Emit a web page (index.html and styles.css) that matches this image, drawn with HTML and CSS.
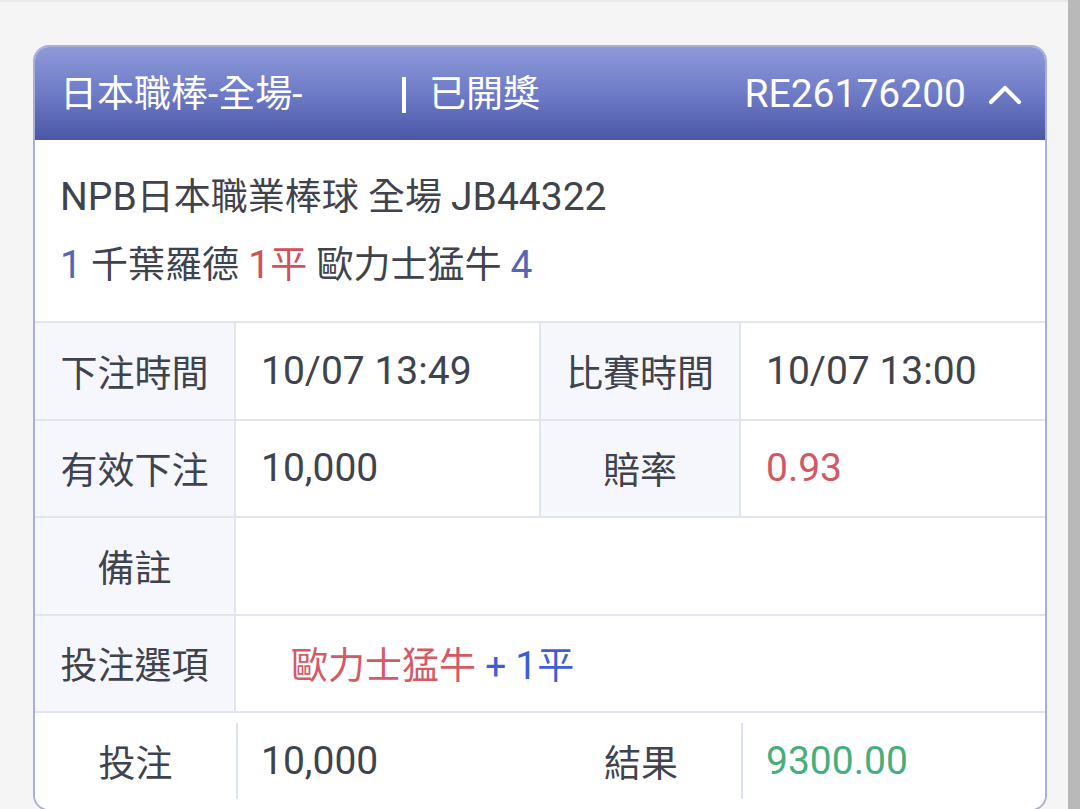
FILE: index.html
```html
<!DOCTYPE html>
<html lang="zh-Hant">
<head>
<meta charset="utf-8">
<title>注單</title>
<link rel="stylesheet" href="styles.css">
</head>
<body>
<div class="page">
  <div class="card">
    <div class="card-head">
      <span class="head-title">日本職棒-全場-</span>
      <span class="head-bar"></span>
      <span class="head-status">已開獎</span>
      <span class="head-id num">RE26176200</span>
      <svg class="chevron" width="34" height="20" viewBox="0 0 34 20"><path d="M3 17 L17 3 L31 17" fill="none" stroke="#fff" stroke-width="4.2" stroke-linecap="round" stroke-linejoin="round"/></svg>
    </div>
    <div class="info">
      <div class="info-line"><span class="num">NPB</span>日本職業棒球 全場 <span class="num">JB44322</span></div>
      <div class="info-line"><span class="blue num">1</span> 千葉羅德 <span class="red"><span class="num">1</span>平</span> 歐力士猛牛 <span class="blue num">4</span></div>
    </div>
    <div class="grid">
      <div class="cell label">下注時間</div>
      <div class="cell value"><span class="num">10/07 13:49</span></div>
      <div class="cell label">比賽時間</div>
      <div class="cell value"><span class="num">10/07 13:00</span></div>

      <div class="cell label">有效下注</div>
      <div class="cell value"><span class="num">10,000</span></div>
      <div class="cell label">賠率</div>
      <div class="cell value odds"><span class="num">0.93</span></div>

      <div class="cell label">備註</div>
      <div class="cell value wide"></div>

      <div class="cell label">投注選項</div>
      <div class="cell value wide"><span class="pick-team">歐力士猛牛</span><span class="pick-extra"> + <span class="num">1</span>平</span></div>

      <div class="cell label last">投注</div>
      <div class="cell value last sep"><span class="num">10,000</span></div>
      <div class="cell label last">結果</div>
      <div class="cell value last sep result"><span class="num">9300.00</span></div>
    </div>
  </div>
</div>
<div class="scrollbar"></div>
</body>
</html>
```
FILE: styles.css
```css
* { box-sizing: border-box; }
html, body { margin: 0; padding: 0; }
body {
  background: #f5f5f6;
  border-top: 2px solid #e9e9ec;
  font-family: Roboto, "Noto Sans CJK TC", sans-serif;
  color: #3f434d;
  font-size: 37px;
  overflow: hidden;
  height: 809px;
}
.num { font-size: 39px; }
.page { padding: 43px 33px 0; }
.card {
  background: #fff;
  border: 2px solid #a9afd8;
  border-radius: 16px;
  overflow: hidden;
}
.card-head {
  height: 93px;
  display: flex;
  align-items: center;
  padding: 2px 23px 0 25px;
  color: #fff;
  background: linear-gradient(180deg, #8d9ad9 0%, #6e7bc6 50%, #4b57a6 100%);
  line-height: 1;
}
.head-title { width: 342px; }
.head-bar {
  width: 4px;
  height: 36px;
  background: #fff;
  margin-right: 23px;
}
.head-id { margin-left: auto; margin-right: 22px; }
.chevron { display: block; }
.info {
  padding: 23px 25px 22px;
  line-height: 68px;
}
.info-line { height: 68px; }
.blue { color: #5467b5; }
.red { color: #d4505d; }
.grid {
  display: grid;
  grid-template-columns: 201px 305px 200px 1fr;
  grid-auto-rows: 97.5px;
}
.cell {
  display: flex;
  align-items: center;
  border-top: 2px solid #e1e5f1;
  border-right: 2px solid #e1e5f1;
}
.cell:nth-child(4n) { border-right: none; }
.label {
  justify-content: center;
  background: #f6f7fc;
}
.value { padding-left: 25px; background: #fff; }
.wide { grid-column: span 3; border-right: none; }
.odds { color: #cf5a64; }
.pick-team { color: #d45a66; margin-left: 30px; }
.pick-extra { color: #3c5fd8; white-space: pre; }
.last { background-color: #fff; border-right: none; }
.sep {
  background-image: linear-gradient(#dde2f0, #dde2f0);
  background-repeat: no-repeat;
  background-position: left center;
  background-size: 2px 76px;
}
.result { color: #48ad7b; }
.scrollbar {
  position: fixed;
  top: 0;
  right: 0;
  width: 12px;
  height: 100%;
  background: #b9b9b9;
}
```
